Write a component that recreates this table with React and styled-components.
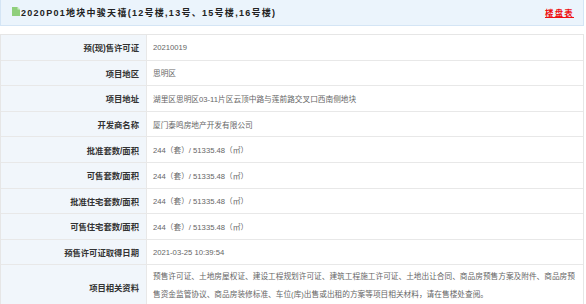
import styled, { createGlobalStyle } from "styled-components";

const GlobalStyle = createGlobalStyle`
  body {
    margin: 0;
    background: #fff;
    font-family: "Liberation Sans", "Noto Sans CJK SC", sans-serif;
  }
`;

const rows = [
  { label: "预(现)售许可证", value: "20210019" },
  { label: "项目地区", value: "思明区" },
  { label: "项目地址", value: "湖里区思明区03-11片区云顶中路与莲前路交叉口西南侧地块" },
  { label: "开发商名称", value: "厦门泰鸣房地产开发有限公司" },
  { label: "批准套数/面积", area: true },
  { label: "可售套数/面积", area: true },
  { label: "批准住宅套数/面积", area: true },
  { label: "可售住宅套数/面积", area: true },
  { label: "预售许可证取得日期", value: "2021-03-25 10:39:54" },
  {
    label: "项目相关资料",
    value:
      "预售许可证、土地房屋权证、建设工程规划许可证、建筑工程施工许可证、土地出让合同、商品房预售方案及附件、商品房预售资金监管协议、商品房装修标准、车位(库)出售或出租的方案等项目相关材料，请在售楼处查阅。",
    tall: true,
  },
];

export default function App() {
  return (
    <Page>
      <GlobalStyle />
      <Header>
        <Title>
          <DocIcon width="8" height="9" viewBox="0 0 8 9">
            <path d="M0 0 H5.5 L8 2.5 V9 H0 Z" fill="#8fcf7c" />
            <path d="M5.5 0 V2.5 H8 Z" fill="#d4efc9" />
          </DocIcon>
          2020P01地块中骏天禧(12号楼,13号、15号楼,16号楼)
        </Title>
        <TableLink href="#">楼盘表</TableLink>
      </Header>
      <Table>
        {rows.map((r) => (
          <Row key={r.label} $tall={r.tall}>
            <Label>{r.label}</Label>
            <Value $tall={r.tall}>
              {r.area ? (
                <>
                  244（套）/ 51335.48（㎡）
                </>
              ) : (
                r.value
              )}
            </Value>
          </Row>
        ))}
      </Table>
    </Page>
  );
}

const Page = styled.div`
  width: 584px;
`;

const Header = styled.div`
  height: 25.6px;
  box-sizing: border-box;
  display: flex;
  align-items: center;
  justify-content: space-between;
  padding: 0 9px 0 11px;
  background: #ebf4fc;
  border: 1px solid #d4e5f5;
  border-top: none;
`;

const Title = styled.h2`
  margin: 0;
  display: flex;
  align-items: center;
  gap: 1px;
  font-size: 9px;
  font-weight: bold;
  letter-spacing: 1.28px;
  color: #222;
`;

const DocIcon = styled.svg`
  display: block;
  margin-top: -1px;
`;

const TableLink = styled.a`
  font-size: 8.4px;
  font-weight: bold;
  letter-spacing: 1.3px;
  color: #ee1111;
  text-decoration: underline;
`;

const Table = styled.div`
  margin-top: 8.4px;
  border: 1px solid #e6e6e6;
  border-bottom: none;
`;

const Row = styled.div`
  display: grid;
  grid-template-columns: 146px 1fr;
  min-height: 25.6px;
  box-sizing: border-box;
  border-bottom: 1px solid #e8e8e8;
`;

const Label = styled.div`
  display: flex;
  align-items: center;
  justify-content: flex-end;
  padding-right: 7px;
  background: #f1f6fb;
  border-right: 1px solid #e8e8e8;
  font-size: 8.32px;
  font-weight: bold;
  color: #333;
`;

const Value = styled.div`
  display: flex;
  align-items: center;
  padding: ${(p) => (p.$tall ? "3px 8px 4px 6px" : "0 8px 0 6px")};
  font-size: 7.68px;
  line-height: ${(p) => (p.$tall ? "17.9px" : "normal")};
  color: #666;
`;
